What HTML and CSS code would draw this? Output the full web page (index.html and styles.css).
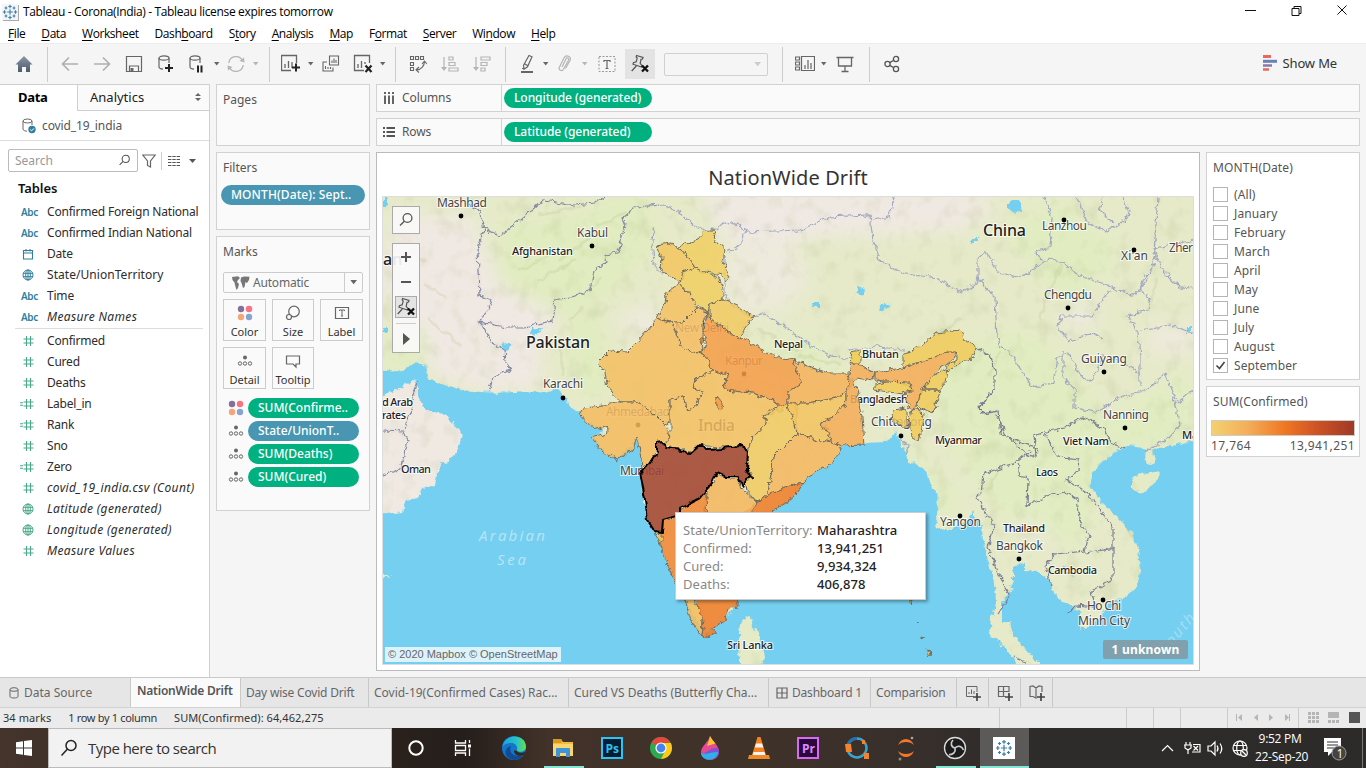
FILE: index.html
```html
<!DOCTYPE html>
<html lang="en">
<head>
<meta charset="utf-8">
<title>Tableau - Corona(India)</title>
<link rel="stylesheet" href="styles.css">
</head>
<body>
<svg class="defs" width="0" height="0">
  <defs>
    <symbol id="tableau" viewBox="0 0 16 16"><g stroke="#3d7fa8" stroke-width="1.1"><path d="M8 5.2v5.6M5.2 8h5.6M8 .8v3.4M6.3 2.5h3.4M8 11.800v3.400M6.300 13.500h3.400M.8 8h3.400M2.500 6.300v3.400M11.800 8h3.400M13.500 6.300v3.400M4 2.600v2.800M2.600 4h2.800M12 2.600v2.800M10.600 4h2.800M4 10.600v2.800M2.600 12h2.800M12 10.600v2.800M10.600 12h2.800"/></g></symbol>
    <symbol id="caret" viewBox="0 0 6 4"><path d="M0 0h5.400L2.700 3.400z" fill="currentColor"/></symbol>
    <symbol id="pin" viewBox="0 0 20 20"><g fill="none" stroke="#555" stroke-width="1.2"><path d="M6.500 1.500l6.500 2-.5 1.500-1.500.3-.8 4 1.800 2.300-.5 1.400-8.500-2.800.4-1.500 2.800-1 1-3.600-1-1.300zM6.300 12l-4.600 5"/></g><path d="M12 11.500l6 6M18 11.500l-6 6" stroke="#111" stroke-width="2.300"/></symbol>
    <symbol id="hash" viewBox="0 0 16 12"><path d="M6.500 1v10M10.500 1v10M3.500 4h10M3.500 8h10" stroke="#49a887" stroke-width="1.100"/></symbol>
    <symbol id="ehash" viewBox="0 0 16 12"><path d="M6.500 1v10M10.500 1v10M3.500 4h10M3.500 8h10M0 4.800h3M0 7.200h3" stroke="#49a887" stroke-width="1.100"/></symbol>
    <symbol id="globe" viewBox="0 0 12 12"><g fill="none" stroke="currentColor"><circle cx="6" cy="6" r="5"/><ellipse cx="6" cy="6" rx="2.300" ry="5"/><path d="M1 4.300h10M1 7.700h10M6 1v10"/></g></symbol>
    <symbol id="detail" viewBox="0 0 16 12"><circle cx="8" cy="2.500" r="2" fill="#666"/><g fill="none" stroke="#666"><circle cx="3" cy="8.500" r="1.700"/><circle cx="8" cy="8.500" r="1.700"/><circle cx="13" cy="8.500" r="1.700"/></g></symbol>
    <symbol id="color" viewBox="0 0 16 16"><circle cx="4" cy="4" r="3.200" fill="#85709b"/><circle cx="12" cy="4" r="3.200" fill="#f8737f"/><circle cx="4" cy="12" r="3.200" fill="#f5a578"/><circle cx="12" cy="12" r="3.200" fill="#86a4cf"/></symbol>
    <symbol id="lens" viewBox="0 0 16 16"><g fill="none" stroke="currentColor" stroke-width="1.300"><circle cx="9.500" cy="6" r="4.400"/><path d="M6.300 9.200L2 13.500"/></g></symbol>
    <symbol id="plus" viewBox="0 0 8 8"><path d="M4 0v8M0 4h8" stroke="#444" stroke-width="1.700"/></symbol>
  </defs>
</svg>

<header class="titlebar">
  <svg class="app-ico" width="16" height="16"><use href="#tableau"/></svg>
  <span class="app-title">Tableau - Corona(India) - Tableau license expires tomorrow</span>
  <svg class="winctl" width="120" height="20"><g fill="none" stroke="#111"><path d="M9 8.500h11M56 6.500h7v7h-7zM58 6V4.500h7v7h-2M101.500 3.500l9 9M110.500 3.500l-9 9"/></g></svg>
</header>
<nav class="menubar">
  <span><u>F</u>ile</span><span><u>D</u>ata</span><span><u>W</u>orksheet</span><span>Dash<u>b</u>oard</span><span>S<u>t</u>ory</span><span><u>A</u>nalysis</span><span><u>M</u>ap</span><span>F<u>o</u>rmat</span><span><u>S</u>erver</span><span>Wi<u>n</u>dow</span><span><u>H</u>elp</span>
</nav>

<div class="toolbar">
  <span class="t w47"><svg width="18" height="18"><defs><linearGradient id="hg" x2="0" y2="1"><stop stop-color="#8b96a5"/><stop offset="1" stop-color="#4d5b6d"/></linearGradient></defs><path d="M9 1L.5 9.500H3V17h4v-5h4v5h4V9.500h2.500z" fill="url(#hg)"/></svg></span><i class="sep"></i>
  <span class="t w32 ml6"><svg width="18" height="16"><path d="M17 8H2M8 1.500L1.500 8 8 14.500" fill="none" stroke="#b0b0b0" stroke-width="1.700"/></svg></span>
  <span class="t w32"><svg width="18" height="16"><path d="M1 8h15M10 1.500L16.500 8 10 14.500" fill="none" stroke="#b0b0b0" stroke-width="1.700"/></svg></span>
  <span class="t w32"><svg width="18" height="18"><path d="M1.500 1.500h15v15h-15zM4.500 16v-5h9v5" fill="none" stroke="#666" stroke-width="1.200"/><path d="M5.500 13h3v3.500h-3z" fill="#666"/></svg></span>
  <span class="t w32"><svg width="18" height="20"><g fill="none" stroke="#666" stroke-width="1.200"><ellipse cx="7" cy="4" rx="5" ry="2.200"/><path d="M2 4v9c0 1.300 2 2 4 2.200M12 4v5"/></g><path d="M12 10v8M8 14h8" stroke="#222" stroke-width="2"/></svg></span>
  <span class="t w30"><svg width="18" height="20"><g fill="none" stroke="#666" stroke-width="1.200"><ellipse cx="7" cy="4" rx="5" ry="2.200"/><path d="M2 4v9c0 1.300 2 2 4 2.200M12 4v5"/></g><path d="M10 11.500v7M13.500 11.500v7" stroke="#222" stroke-width="2"/></svg></span>
  <span class="t c9 dark"><svg width="6" height="4"><use href="#caret"/></svg></span>
  <span class="t w30"><svg width="18" height="18"><g fill="none" stroke="#b5b5b5" stroke-width="1.300"><path d="M1.800 8A7.300 7.300 0 0 1 15.500 5.500M16.200 10A7.300 7.300 0 0 1 2.500 12.500"/></g><path d="M12.500 6l5 1.500-.5-5zM5.500 12l-5-1.500.5 5z" fill="#b5b5b5"/></svg></span>
  <span class="t c10 pale"><svg width="6" height="4"><use href="#caret"/></svg></span><i class="sep ml8"></i>
  <span class="t w30 ml6"><svg width="20" height="20"><path d="M15.500 9V1.500h-15v15H10M4 14v-4M7.500 14V7M11 14V8" fill="none" stroke="#666" stroke-width="1.300"/><path d="M15 9.500v8M11 13.500h8" stroke="#222" stroke-width="2"/></svg></span>
  <span class="t c9 dark"><svg width="6" height="4"><use href="#caret"/></svg></span>
  <span class="t w32"><svg width="18" height="18"><g fill="none" stroke="#666" stroke-width="1.100"><path d="M7.500 1h9v9h-9zM10 8V5.500M12 8V3.500M14 8V5M5 7H1v9h10v-3.500M3.500 14v-3M6 14v-2M8.500 14v-2"/></g></svg></span>
  <span class="t w32"><svg width="20" height="20"><path d="M16.500 9V1.500h-15v15H11M5 14v-4M8.500 14V7M12 10V8" fill="none" stroke="#666" stroke-width="1.300"/><path d="M12.500 11.500l6 6.500M18.500 11.500l-6 6.500" stroke="#222" stroke-width="2.200"/></svg></span>
  <span class="t c9 dark pull"><svg width="6" height="4"><use href="#caret"/></svg></span><i class="sep ml8"></i>
  <span class="t w32 ml6"><svg width="18" height="18"><g fill="none" stroke="#666" stroke-width="1.100"><path d="M1.500 1.500h3v3h-3zM6.500 1.500h3v3h-3zM11.500 1.500h3v3h-3zM1.500 7.500h3v3h-3zM1.500 12.500h3v3h-3zM15.500 6.500c0 4-3 8-8 8.500M13 9l2.500-3L18 9M10 12l-3 2.800L10 17.500"/></g></svg></span>
  <span class="t w32"><svg width="18" height="18"><g fill="none" stroke="#b4b4b4" stroke-width="1.200"><path d="M3 2v12M8 2h4v3H8zM8 7.500h6v3H8zM8 13h9v3H8z"/></g><path d="M0 12h6l-3 4z" fill="#b4b4b4"/></svg></span>
  <span class="t w32"><svg width="18" height="18"><g fill="none" stroke="#b4b4b4" stroke-width="1.200"><path d="M3 2v12M8 2h9v3H8zM8 7.500h6v3H8zM8 13h4v3H8z"/></g><path d="M0 12h6l-3 4z" fill="#b4b4b4"/></svg></span><i class="sep ml7"></i>
  <span class="t w28 ml7"><svg width="14" height="20"><path d="M9 1.500l3 1.300-4.500 10-3.500 2.500-.5-4zM4 9.500l3.500 2M2 14.500h3" fill="none" stroke="#666" stroke-width="1.200"/><path d="M1 18h12" stroke="#666" stroke-width="2"/></svg></span>
  <span class="t c9 dark"><svg width="6" height="4"><use href="#caret"/></svg></span>
  <span class="t w30"><svg width="14" height="18"><path d="M4 12l4-8c1-2 3.500-1 2.500 1.200l-5 9C4 17 0 15 1.500 12L6 3c2-4 8-1.500 6 2.500l-4.500 8" fill="none" stroke="#b4b4b4" stroke-width="1.200"/></svg></span>
  <span class="t c10 pale"><svg width="6" height="4"><use href="#caret"/></svg></span>
  <span class="t w34"><svg width="18" height="18"><path d="M1 1.500h16v15H1z" fill="none" stroke="#999" stroke-dasharray="2 1.500"/><path d="M6 7V5.500h6V7M9 5.500v8M7.500 13.500h3" fill="none" stroke="#666" stroke-width="1.200"/></svg></span>
  <span class="t w30 active ml1"><svg width="20" height="20"><use href="#pin"/></svg></span>
  <span class="combo"><svg width="8" height="5" viewBox="0 0 6 4"><use href="#caret"/></svg></span><i class="sep ml14"></i>
  <span class="t w36 ml4"><svg width="20" height="18"><g fill="none" stroke="#666" stroke-width="1.200"><path d="M.5 2h4v3h-4zM.5 7h4v3h-4zM.5 12h4v3h-4zM6.500 1.500h13v14h-13zM10 14v-4M13 14V5M16 14V8"/></g></svg></span>
  <span class="t c9 dark mn4"><svg width="6" height="4"><use href="#caret"/></svg></span>
  <span class="t w34"><svg width="18" height="18"><path d="M.5 2.500h17M2.500 3v8h13V3M9 11v5M5.500 16.500h7" fill="none" stroke="#666" stroke-width="1.300"/></svg></span><i class="sep ml7"></i>
  <span class="t w32 ml6"><svg width="18" height="18"><g fill="none" stroke="#555" stroke-width="1.300"><circle cx="4.500" cy="9" r="2.600"/><circle cx="13" cy="4" r="2.600"/><circle cx="13" cy="14" r="2.600"/><path d="M6.800 7.600l4-2.300M6.800 10.400l4 2.300"/></g></svg></span>
  <span class="showme"><svg width="16" height="16"><path d="M1 1.500h8" stroke="#e56a5c" stroke-width="3"/><path d="M1 6.300h14" stroke="#6b7fb8" stroke-width="3"/><path d="M1 10.500h9" stroke="#8a78a8" stroke-width="2.500"/><path d="M1 14.500h6" stroke="#e56a5c" stroke-width="2.500"/></svg>Show Me</span>
</div>

<main class="work">
  <aside class="data">
    <div class="dtabs"><b>Data</b><span>Analytics<svg width="8" height="10"><path d="M1 4l3-3 3 3zM1 6l3 3 3-3z" fill="#666"/></svg></span></div>
    <div class="source"><svg width="14" height="16"><g fill="none" stroke="#666"><ellipse cx="5.500" cy="3" rx="4.500" ry="2"/><path d="M1 3v8c0 1.500 2 2 4 2.200M10 3v4"/></g><circle cx="10" cy="11.500" r="3.700" fill="#317f9f"/><path d="M8.200 11.500l1.400 1.400 2.300-2.500" fill="none" stroke="#fff"/></svg>covid_19_india</div>
    <div class="find"><span class="searchbox">Search<svg width="13" height="13"><use href="#lens"/></svg></span><svg width="14" height="14"><path d="M.8 1h12.400L8.500 7v6l-3-1.500V7z" fill="none" stroke="#666" stroke-width="1.200"/></svg><i></i><svg width="30" height="12"><path d="M0 1.500h12M0 4.500h12M0 7.500h12M0 10.500h12" stroke="#555" stroke-width="1.200" stroke-dasharray="3.400 .9"/><path d="M21 4h7l-3.500 4z" fill="#555"/></svg></div>
    <h3>Tables</h3>
    <ul class="fields dims">
      <li><em class="abc">Abc</em>Confirmed Foreign National</li>
      <li><em class="abc">Abc</em>Confirmed Indian National</li>
      <li><svg width="12" height="12"><path d="M1.500 2.500h9v8.500h-9zM1.500 5h9M4 1v2.500M8 1v2.500" fill="none" stroke="#317f9f" stroke-width="1.100"/></svg>Date</li>
      <li class="blue"><svg width="12" height="12"><use href="#globe"/></svg><span class="wide">State/UnionTerritory</span></li>
      <li><em class="abc">Abc</em>Time</li>
      <li class="it"><em class="abc">Abc</em>Measure Names</li>
    </ul>
    <ul class="fields">
      <li><svg width="16" height="12"><use href="#hash"/></svg>Confirmed</li>
      <li><svg width="16" height="12"><use href="#hash"/></svg>Cured</li>
      <li><svg width="16" height="12"><use href="#hash"/></svg>Deaths</li>
      <li><svg width="16" height="12"><use href="#ehash"/></svg>Label_in</li>
      <li><svg width="16" height="12"><use href="#ehash"/></svg>Rank</li>
      <li><svg width="16" height="12"><use href="#hash"/></svg>Sno</li>
      <li><svg width="16" height="12"><use href="#ehash"/></svg>Zero</li>
      <li class="it"><svg width="16" height="12"><use href="#hash"/></svg>covid_19_india.csv (Count)</li>
      <li class="it green"><svg width="12" height="12"><use href="#globe"/></svg>Latitude (generated)</li>
      <li class="it green"><svg width="12" height="12"><use href="#globe"/></svg>Longitude (generated)</li>
      <li class="it"><svg width="16" height="12"><use href="#hash"/></svg>Measure Values</li>
    </ul>
  </aside>

  <section class="cards">
    <div class="card pages"><h4>Pages</h4></div>
    <div class="card filters"><h4>Filters</h4><span class="pill bl">MONTH(Date): Sept..</span></div>
    <div class="card marks"><h4>Marks</h4>
      <div class="marktype"><svg width="18" height="14"><path d="M0 1l6-.8L8 2 6 4 5 6l2 2-1 4-1.500 2L3 9 2.500 6.500.5 4zM9 1.500L12 .5l5.500.3L17 4l-2 3-1.500-1-1 5-1.500 1-1.500-5L8.500 5z" fill="#777"/></svg>Automatic<i><svg width="8" height="5" viewBox="0 0 6 4"><use href="#caret"/></svg></i></div>
      <div class="btns">
        <span><svg width="16" height="16"><use href="#color"/></svg>Color</span>
        <span><svg width="16" height="16"><g fill="none" stroke="#666" stroke-width="1.200"><circle cx="9" cy="6.500" r="5.300"/><circle cx="4" cy="12" r="2.500" fill="#fafafa"/></g></svg>Size</span>
        <span><svg width="16" height="16"><path d="M1.500 2.500h13v11h-13z" fill="none" stroke="#666" stroke-width="1.200"/><path d="M5.500 6V5h5v1M8 5v6M7 11h2" fill="none" stroke="#666"/></svg>Label</span>
        <span><svg width="16" height="16" viewBox="0 -2 16 16"><use href="#detail" width="16" height="12"/></svg>Detail</span>
        <span><svg width="16" height="16"><path d="M1.500 3h13v8h-3.500v3l-3-3h-6.500z" fill="none" stroke="#666" stroke-width="1.200"/></svg>Tooltip</span>
      </div>
      <div class="enc"><svg width="16" height="16"><use href="#color"/></svg><span class="pill">SUM(Confirme..</span></div>
      <div class="enc"><svg width="16" height="12"><use href="#detail"/></svg><span class="pill bl">State/UnionT..</span></div>
      <div class="enc"><svg width="16" height="12"><use href="#detail"/></svg><span class="pill">SUM(Deaths)</span></div>
      <div class="enc"><svg width="16" height="12"><use href="#detail"/></svg><span class="pill">SUM(Cured)</span></div>
    </div>
  </section>

  <section class="right">
    <div class="shelf"><label><svg width="12" height="12"><path d="M2 0v2M6 0v2M10 0v2M2 3.500V12M6 3.500V12M10 3.500V12" stroke="#555" stroke-width="1.800"/></svg>Columns</label><span class="pill">Longitude (generated)</span></div>
    <div class="shelf"><label><svg width="12" height="12"><path d="M0 2h2M0 6h2M0 10h2M3.500 2H12M3.500 6H12M3.500 10H12" stroke="#555" stroke-width="1.800"/></svg>Rows</label><span class="pill">Latitude (generated)</span></div>
    <div class="lower">
      <div class="viz">
        <h1>NationWide Drift</h1>
        <div class="map">
<svg width="810" height="467" viewBox="383 197 810 467">
  <defs>
    <filter id="rough" x="-5%" y="-5%" width="110%" height="110%" color-interpolation-filters="sRGB"><feTurbulence type="fractalNoise" baseFrequency=".16" numOctaves="3" seed="4"/><feDisplacementMap in="SourceGraphic" scale="7" xChannelSelector="R" yChannelSelector="G"/></filter>
    <filter id="wavy" x="-5%" y="-5%" width="110%" height="110%" color-interpolation-filters="sRGB"><feTurbulence type="fractalNoise" baseFrequency=".13" numOctaves="1" seed="4"/><feDisplacementMap in="SourceGraphic" scale="8" xChannelSelector="R" yChannelSelector="G"/></filter>
    <filter id="soft" x="-20%" y="-20%" width="140%" height="140%"><feGaussianBlur stdDeviation="9"/></filter>
    <filter id="relief" x="0" y="0" width="100%" height="100%" color-interpolation-filters="sRGB"><feTurbulence type="fractalNoise" baseFrequency=".06 .05" numOctaves="3" seed="9"/><feColorMatrix values="0 0 0 0 .66  0 0 0 0 .70  0 0 0 0 .48  0 2.600 0 0 -1.350"/></filter>
    <path id="asia" d="M375 190H1200V440L1183 443 1158 447 1153 450 1155 463 1148 465 1145 457 1147 450 1140 448 1130 445 1117 450 1110 457 1102 462 1092 473 1090 487 1102 502 1117 517 1132 532 1138 548 1140 570 1137 587 1123 598 1110 602 1102 617 1080 630 1082 613 1070 605 1062 602 1057 597 1052 587 1047 578 1037 573 1025 572 1025 563 1013 564 1013 583 1007 597 1002 603 1002 622 1010 622 1012 633 1025 648 1043 668 1017 666 1007 650 990 635 992 617 996 603 995 583 988 563 983 543 982 527 972 510 968 520 950 530 935 527 938 507 937 493 930 483 927 470 910 462 907 455 900 440 895 430 887 442 863 443 842 447 833 463 807 478 793 497 773 512 745 540 738 600 725 620 705 636 690 610 667 563 655 530 648 520 642 483 643 467 640 453 637 440 617 458 603 450 594 437 603 431 583 418 583 410 570 408 568 400 557 390 533 392 513 392 490 393 463 390 437 383 428 377 425 363 415 363 400 372 375 370Z"/>
    <path id="oman" d="M375 397L397 390 410 382 415 378 418 387 418 397 423 407 447 417 458 430 463 435 458 450 448 462 442 462 437 473 435 485 422 488 418 498 405 500 402 512 375 515Z"/>
    <path id="isles" d="M742 620L750 617 760 638 765 657 758 670 742 670 738 650 740 632ZM1132 482L1137 475 1160 470 1158 480 1143 493 1132 490ZM383 575h8l-2 2h-6z"/>
    <clipPath id="land"><use href="#asia"/><use href="#oman"/><use href="#isles"/></clipPath>
  </defs>
  <rect x="383" y="197" width="810" height="467" fill="#75cff0"/>
  <g filter="url(#rough)"><use href="#asia" fill="#e6eac9"/><use href="#oman" fill="#efe9e2"/><use href="#isles" fill="#e5ebc6"/></g>
  <g clip-path="url(#land)">
    <g filter="url(#soft)" fill="#f0e9e3">
      <path d="M395 215h75l25 60 60 10 0 50-75 0 30 60-70-15-30-40-30-60zM480 300h60v90h-40zM700 190h260l40 15-40 25-110 5-120 10-20-30z"/>
      <path d="M730 250l60-10 20 40-30 30-40 0-15-30zM1060 310l30-10 10 20-30 15zM1150 325h45v30h-45zM380 470h60v40h-60zM610 320l50-20v50zM1040 440l20 20-20 10zM1020 500l35 10 10 30-40 0z" opacity=".75"/>
      <path d="M500 225l80-10 60-30 20 60-50 50-50 20-60-30zM570 310l30 0 10 90-40-10zM385 330h40v35h-40z" fill="#e1ecc0"/>
      <path d="M740 350l60 20 50 5-40-40zM930 350l100-20 80 90 80-50v70l-80 10-30 100-80-40-60-80zM1000 230l60-30 60 50-50 60zM900 440l60 60-20 20z" fill="#e0edbf" opacity=".85"/>
    </g>
    <rect x="383" y="197" width="810" height="467" filter="url(#relief)" opacity=".2"/>
    <g fill="none" stroke="#bcc391" stroke-width="3" opacity=".25" stroke-linecap="round" filter="url(#wavy)"><path d="M520 270l30-15M540 280l35-20M560 260l30-22M430 320l30 25M425 285l20 12M410 250l15 12M560 340l3 35M570 320l12-12M590 290l12-12M760 330l35 20M800 355l40 10M1040 320l8-30M1050 290l12-25M1000 350l-10 25M930 400l-10 30M1000 470l-12 20M1125 520l8 18M1150 300l8-20M960 320l-25 15M540 215l40-8M600 225l25-12"/></g>
  </g>
  <g filter="url(#rough)" fill="#75cff0"><path d="M858 286l9 4-5 6-7-3zM880 305l10 0-6 6-5-1zM812 303h8v4h-7zM1008 202l10-2 4 9-6 4-8-4zM972 238h6v4h-6zM531 329l12-2-4 6-8 1zM504 343l8 2-5 7-5-3zM383 196h4v12h-4zM1062 565l5 4 6 7-7-2zM383 328h5v4h-5zM1187 327h5v5h-5z"/></g>
  <g filter="url(#rough)" fill="none" stroke="#a2a8c2" stroke-width="1.200">
    <path stroke="#8288a3" d="M467 203L480 211 484 230 477 250 478 270 479 295 492 300 480 322 505 327 525 327 552 321 555 300 575 296 590 290 594 270 607 262 605 255 618 253 625 225 622 218 635 207 660 205M484 228L500 236 520 220 532 210 543 200 575 205 595 203 605 196M480 322L492 343 505 350 506 362 511 368 493 377 489 393M383 430l20 1 5 10-8 28-17 6M413 407l-8 20M418 381l-5 18"/>
    <path d="M640 207L665 205 680 212 692 225 705 230 717 230 725 222 740 225 745 232 737 248 727 252 M655 225l-3 15 2 25 10 10" /><path d="M725 255l0 40 6 10 22 12 10-4 28 18 20 15 20 10 20 3" /><path d="M745 232L775 231 800 230 830 217 870 215 873 240 880 260 895 270 913 275 938 278 950 287 962 292 975 285 978 278 M873 220l17-3 4-20M978 278l0-20 8-6 12 20 22 6 15-10 15-10 15 6 17 13 25 8 25 10 8-4 13-25 3-10-3-10M1044 197l8 20-2 30-15 5 8 8 M1077 197l10 25 18 10 15-8 10-10-10-22-15-2-5 20 12 12 M1158 197l-4 55 10 20 15 15 14 1M1154 250l39-10M1145 275l-5 15 10 8-2 12-20 5 10 18 2 25 0 28"/>
    <path d="M978 278l17 20 2 40 3 10 8 2 25 38 20-5 5-25 10-5 15 25 8 4 12-25 20 5 18 12 M1110 290l-18 26-30 0-5 10 12 15 25-8 8 5 M1063 350l0 25 12 15 0 18 20 4 25-14 30-10 15-15 12 30 18-15M1140 330l30-5 23 8M1172 395l8 30-10 12-25 15" />
    <path d="M977 347l12 8 6 15 0 18-15 18 2 8 16-3 3 22 15 8 22 8" stroke="#73788f"/>
    <path d="M996 415l10 20 22 20 8 2-2-22 15-4 15-3 20-11 20 12 8 15 14 4M1045 434l12 22 22 3-1 12-12 8 22 14 25 35 0 50-22 14 5 15-20-2-8 8M1030 450l-15 13-32 11-2 20-4 4 17 28-6 22 17 40 5 8-12 18M1018 463l2 13 8 2-1 28 20-10 18-4 12 8 4 25 8 10-4 16-30 3-10 12 6 20M1084 553l32-5M1014 658l14 6" stroke="#7a7f95"/>
    <path d="M900 440l8 5-2 10M848 350l30-3 26 3" />
  </g>
  <g class="lb">
    <text class="city" x="437" y="207" textLength="50">Mashhad</text><text class="city" x="577" y="237" textLength="31">Kabul</text>
    <text class="ctry" x="512" y="255" textLength="61">Afghanistan</text><text class="big" x="526" y="348" textLength="64">Pakistan</text>
    <text class="city" x="543" y="388" textLength="40">Karachi</text><text class="big" x="983" y="236" textLength="43">China</text>
    <text class="city" x="1042" y="230" textLength="45">Lanzhou</text><text class="city" x="1121" y="260" textLength="27">Xi'an</text>
    <text class="city" x="1169" y="252" textLength="24">Zher</text><text class="city" x="1044" y="299" textLength="48">Chengdu</text>
    <text class="city" x="1081" y="363" textLength="46">Guiyang</text><text class="city" x="1103" y="419" textLength="46">Nanning</text>
    <text class="ctry" x="774" y="348" textLength="29">Nepal</text><text class="ctry" x="862" y="358" textLength="37">Bhutan</text>
    <text class="ctry" x="850" y="403" textLength="58">Bangladesh</text><text class="city" x="871" y="426" textLength="61">Chittagong</text>
    <text class="ctry" x="935" y="444" textLength="47">Myanmar</text><text class="ctry" x="1063" y="445" textLength="46">Viet Nam</text>
    <text class="ctry" x="1036" y="476" textLength="22">Laos</text><text class="ctry" x="1003" y="532" textLength="42">Thailand</text>
    <text class="city" x="996" y="550" textLength="47">Bangkok</text><text class="ctry" x="1048" y="574" textLength="49">Cambodia</text>
    <text class="city" x="1087" y="610" textLength="34">Ho Chi</text><text class="city" x="1078" y="625" textLength="52">Minh City</text>
    <text class="city" x="940" y="526" textLength="41">Yangon</text><text class="ctry" x="727" y="649" textLength="46">Sri Lanka</text>
    <text class="ctry" x="401" y="473" textLength="30">Oman</text><text class="big" x="383" y="265">an</text>
    <text class="ctry" x="382" y="406" textLength="31">d Arab</text><text class="ctry" x="382" y="419" textLength="24">rates</text>
    <text class="ctry" x="1182" y="439">Ma</text>
    <text class="city" x="675" y="332" textLength="54">New Delhi</text><text class="city" x="725" y="365" textLength="38">Kanpur</text>
    <text class="big" x="698" y="431" textLength="37">India</text><text class="city" x="606" y="416" textLength="64">Ahmedabad</text><text class="city" x="620" y="475" textLength="44">Mumbai</text>
    <g><circle cx="461" cy="216" r="2.400"/><circle cx="592" cy="246" r="2.400"/><circle cx="563" cy="398" r="2.400"/><circle cx="1064" cy="220" r="2.400"/><circle cx="1134" cy="250" r="2.400"/><circle cx="1068" cy="308" r="2.400"/><circle cx="1104" cy="372" r="2.400"/><circle cx="1125" cy="428" r="2.400"/><circle cx="901" cy="436" r="2.400"/><circle cx="960" cy="516" r="2.400"/><circle cx="1019" cy="559" r="2.400"/><circle cx="1103" cy="600" r="2.400"/><circle cx="744" cy="374" r="2.400"/><circle cx="638" cy="425" r="2.400"/></g>
    <text class="sea" x="479" y="541" textLength="68">Arabian</text><text class="sea" x="497" y="565" textLength="31">Sea</text>
    <text class="sea" x="0" y="0" transform="translate(1166 654) rotate(-50)" opacity=".7">South C</text>
  </g>
  <g class="states" filter="url(#rough)">
    <path fill="#f3c55f" d="M657 245L670 243 677 247 685 253 695 268 685 272 682 282 667 275 660 267 662 257Z"/>
    <path fill="#f1cf62" d="M677 247L697 240 705 231 713 231 717 243 725 250 723 262 730 277 727 281 722 275 708 272 700 272 695 268 685 253Z"/>
    <path fill="#f1cf62" d="M683 272L695 268 707 273 718 277 723 290 723 300 710 302 708 313 700 308 690 295 680 283Z"/>
    <path fill="#f5c163" d="M680 283L667 292 665 303 657 317 665 322 683 322 697 308 690 295Z"/>
    <path fill="#f5bd63" d="M665 322L672 323 675 330 678 340 685 350 703 353 702 337 702 323 708 313 697 308 683 322Z"/>
    <path fill="#f1ca61" d="M710 302L723 300 740 307 753 316 745 328 740 338 722 328 710 318Z"/>
    <path fill="#f5be61" d="M657 318L637 342 627 352 610 351 598 363 605 373 608 387 617 398 620 402 637 402 653 413 665 425 670 423 670 400 683 397 687 410 695 408 703 390 693 388 695 380 712 370 703 353 685 350 678 340 672 323Z"/>
    <path fill="#f5bb5e" d="M583 408L603 406 617 402 637 402 653 413 665 425 670 436 664 443 657 443 657 452 650 463 642 468 640 453 637 437 633 450 617 460 603 452 590 437 607 433 609 427 597 430 583 420 580 413Z"/>
    <path fill="#f4bf61" d="M712 370L728 375 723 387 727 390 753 393 767 398 778 402 778 411 762 415 768 423 753 437 748 448 740 446 722 448 707 447 700 445 690 453 683 450 665 447 664 443 670 436 670 400 683 397 687 410 695 408 703 390 693 388 695 380Z"/>
    <path fill="#f49c47" d="M708 313L710 318 722 328 740 338 757 347 777 357 793 360 798 372 802 383 787 393 787 403 783 413 778 411 778 402 767 398 753 393 740 392 727 390 723 387 728 375 712 370 703 353 707 340 702 330ZM718 397l6 8-4 3-5-4z"/>
    <path fill="#d88124" d="M701 338l4 1-1 5-4-1z"/>
    <path fill="#f1ca61" d="M787 403L797 405 797 433 785 445 773 457 772 470 768 493 757 502 747 490 745 480 752 478 747 470 748 448 753 437 768 423 762 415Z"/>
    <path fill="#f4b259" d="M793 360L813 368 827 373 850 373 852 387 847 390 837 398 807 403 787 403 787 393 802 383 798 372Z"/>
    <path fill="#f3c35f" d="M787 403L807 403 837 398 847 390 847 402 833 417 820 422 827 430 833 442 820 440 797 433Z"/>
    <path fill="#f4ab56" d="M850 373L852 363 860 365 875 372 873 380 857 377 853 383 860 392 857 397 862 417 864 445 842 446 833 442 820 422 833 417 847 402 847 390Z"/>
    <path fill="#f4b65d" d="M797 433L820 440 833 442 842 447 833 463 807 478 803 484 790 485 773 492 757 502 768 493 772 470 773 457 785 445Z"/>
    <path fill="#ee7b28" d="M804 483L790 485 773 492 757 502 735 520 745 540 773 512 793 497Z"/>
    <path fill="#f4b65d" d="M717 472L727 477 738 477 742 488 757 502 748 520 702 520 707 495 712 483Z"/>
    <path fill="#f08532" d="M707 493L680 508 680 515 663 520 662 532 658 535 660 543 667 563 675 583 700 590 706 520Z"/>
    <path fill="#f1ca61" d="M655 532L662 533 662 541 659 543Z"/>
    <path fill="#f4bb5d" d="M670 573L675 583 685 600 690 617 695 628 702 637 703 615 697 605 690 590Z"/>
    <path fill="#ee7b28" d="M697 590L738 590 738 607 730 608 725 620 715 627 713 633 705 638 702 636 704 620 697 607Z"/>
    <path fill="#f1ca4a" d="M852 352L860 350 860 364 850 364Z"/>
    <path fill="#f4ab56" d="M875 372L903 368 927 360 947 352 957 352 953 360 938 370 923 387 917 407 910 408 905 400 911 390 905 383 875 380Z"/>
    <path fill="#f1ca58" d="M903 355L920 347 937 333 960 330 965 340 977 347 972 360 960 362 947 372 948 365 957 360 957 352 947 352 927 360 903 367Z"/>
    <path fill="#f1ca58" d="M947 368L945 383 940 390 923 390 930 378ZM920 390L942 390 933 413 918 408ZM912 408L923 412 922 427 918 440 912 437 910 420ZM875 383L887 381 910 382 912 392 903 394 875 390ZM893 410L907 408 907 427 902 427 892 418ZM910 600l3 0-1 5zM926 648l5 3-1 5zM917 621h1v1zM922 637l3 1-3 1z"/>
  </g>
  <path class="maha" filter="url(#wavy)" d="M657 443L663 442 665 448 683 450 690 454 700 445 707 449 722 448 740 446 748 450 747 470 752 478 745 480 742 488 738 477 727 477 717 472 712 483 700 498 680 508 680 515 663 520 662 532 655 531 648 520 645 500 642 483 640 470 650 463 657 452Z"/>
</svg>
          <span class="mt search"><svg width="16" height="16"><use href="#lens"/></svg></span>
          <span class="mt tools"><svg width="12" height="12"><path d="M6 1v10M1 6h10" stroke="#555" stroke-width="2"/></svg><svg width="12" height="12"><path d="M1 6h10" stroke="#555" stroke-width="2"/></svg><b><svg width="20" height="20"><use href="#pin"/></svg></b><i></i><svg width="8" height="12"><path d="M1 0l7 6-7 6z" fill="#555"/></svg></span>
          <span class="credit">© 2020 Mapbox © OpenStreetMap</span>
          <span class="unknown">1 unknown</span>
          <dl class="tip"><dt>State/UnionTerritory:</dt><dd>Maharashtra</dd><dt>Confirmed:</dt><dd>13,941,251</dd><dt>Cured:</dt><dd>9,934,324</dd><dt>Deaths:</dt><dd>406,878</dd></dl>
        </div>
      </div>
      <aside class="legends">
        <div class="months"><h4>MONTH(Date)</h4>
          <p><i></i>(All)</p><p><i></i>January</p><p><i></i>February</p><p><i></i>March</p><p><i></i>April</p><p><i></i>May</p><p><i></i>June</p><p><i></i>July</p><p><i></i>August</p><p><i><svg width="13" height="13"><path d="M2.500 6.500l3 3 5-6.500" fill="none" stroke="#444" stroke-width="1.600"/></svg></i>September</p></div>
        <div class="legend"><h4>SUM(Confirmed)</h4><div class="ramp"></div><div class="ends"><span>17,764</span><span>13,941,251</span></div></div>
      </aside>
    </div>
  </section>
</main>

<nav class="sheets">
  <span class="s1"><svg width="10" height="12"><g fill="none" stroke="#666"><ellipse cx="5" cy="2.500" rx="4" ry="1.800"/><path d="M1 2.500v7c0 2 8 2 8 0v-7"/></g></svg>Data Source</span><span class="s2">NationWide Drift</span><span class="s3">Day wise Covid Drift</span><span class="s4">Covid-19(Confirmed Cases) Rac...</span><span class="s5">Cured VS Deaths (Butterfly Cha...</span><span class="s6"><svg width="12" height="12"><path d="M1 1h10v10H1zM6 1v10M1 6h10" fill="none" stroke="#666" stroke-width="1.200"/></svg>Dashboard 1</span><span class="s7">Comparision</span>
  <span class="s8"><svg width="16" height="16"><path d="M12 7V1.500H1.500v10H8M4 9V7M6.500 9V4.500M9 9V6" fill="none" stroke="#666"/><use href="#plus" x="8" y="8" width="8" height="8"/></svg></span><span class="s8"><svg width="16" height="16"><path d="M12 7V1.500H1.500v10H8M6.500 1.500v10M1.500 6.500H12" fill="none" stroke="#666" stroke-width="1.200"/><use href="#plus" x="8" y="8" width="8" height="8"/></svg></span><span class="s8"><svg width="16" height="16"><path d="M13 7V1.500L10 1 7 3 4 1 1 1.500v10h3l3 1.500V3" fill="none" stroke="#666" stroke-width="1.200"/><use href="#plus" x="8" y="8" width="8" height="8"/></svg></span>
</nav>
<div class="status"><span>34 marks</span><span class="tight">1 row by 1 column</span><span>SUM(Confirmed): 64,462,275</span>
  <svg class="nav" width="367" height="20"><path d="M.5 0v20M127.500 0v20M154.500 0v20M181.500 0v20M228.500 0v20M299.500 0v20" stroke="#ccc"/><path d="M237 6v7h1V6zM243 6v7l-4-3.500zM259 6v7l-4-3.500zM270 6v7l4-3.500zM286 6v7l4-3.500zM290 6v7h1V6z" fill="#b5b5b5"/><path d="M309 5.500h11M309 9.500h11M309 13.500h11" stroke="#b5b5b5" stroke-width="3" stroke-dasharray="3 1"/><path d="M329 4h11v6h-11z" fill="#b5b5b5"/><path d="M329 13.500h11" stroke="#b5b5b5" stroke-width="3" stroke-dasharray="3 1"/><path d="M350 4h11v11h-11z" fill="#555"/></svg>
</div>

<footer class="taskbar">
  <span class="start"><svg width="16" height="16"><path d="M0 2.300L7 1.200V7.600H0zM8 1l8-1v7.600H8zM0 8.500h7v6.300L0 13.800zM8 8.500h8V16l-8-1.100z" fill="#fff"/></svg></span>
  <span class="tsearch"><svg width="18" height="18"><g fill="none" stroke="#222" stroke-width="1.500"><circle cx="11" cy="6.500" r="5"/><path d="M7.500 10L1.500 16.500"/></g></svg>Type here to search</span>
  <span class="app"><svg width="24" height="24"><circle cx="12" cy="12" r="6.700" fill="none" stroke="#fff" stroke-width="2"/></svg></span>
  <span class="app"><svg width="24" height="24"><path d="M2.500 4v3h10V4M2.500 20v-3h10v3M2.500 9.500h10v5h-10zM16.500 4v3M16.500 12.500V20" fill="none" stroke="#fff" stroke-width="1.300"/><path d="M15 8.500h3v3h-3z" fill="#fff"/></svg></span>
  <span class="app"><svg width="26" height="26"><defs><linearGradient id="eg" x1="0" x2="1"><stop stop-color="#1aa0e4"/><stop offset=".6" stop-color="#27c3c5"/><stop offset="1" stop-color="#66e04f"/></linearGradient></defs><circle cx="13" cy="13" r="12" fill="#1476c6"/><path d="M1.500 12C3-2 25-2 25 12c0 4-5 6-9.500 4 2-4-1-8-5-8-5 0-8 2-9 4z" fill="url(#eg)"/><path d="M10 11c-3 6 3 12 12 9-4 7-14 6-17 0-2-4 1-8 5-9z" fill="#114b95"/><path d="M15.500 15.500c2 3 7 3 9 .5l-1.500 4c-5 2-10 0-10-4.500z" fill="#312822"/></svg></span>
  <span class="app run"><svg width="24" height="24"><path d="M2 3h8l2 3h10v14H2z" fill="#f1bd3b"/><path d="M2 3h8l1 2-1 2H2z" fill="#d99a1e"/><path d="M2 8h20v12H2z" fill="#fbd66e"/><path d="M5 21v-8q0-1 1-1h12q1 0 1 1v8h-4v-4H9v4z" fill="#3c95d8"/></svg></span>
  <span class="app"><svg width="24" height="24"><rect x="2" y="2" width="20" height="20" fill="#061e31" stroke="#2fc2f4" stroke-width="2"/><text x="5.500" y="16.500" class="ad" fill="#2fc2f4">Ps</text></svg></span>
  <span class="app"><svg width="24" height="24"><circle cx="12" cy="12" r="11" fill="#2da94f"/><path d="M12 12L2.500 6.500A11 11 0 0 1 21.500 6.500L12 7z" fill="#e5473a"/><path d="M12 7h9.800A11 11 0 0 1 12 23l4.500-9z" fill="#fbc916"/><circle cx="12" cy="12" r="5" fill="#4484ef" stroke="#fff" stroke-width="1.200"/></svg></span>
  <span class="app"><svg width="22" height="26"><path d="M11 1c2 5 9 9 9 16a9 8 0 0 1-18 0C2 11 9 8 11 1z" fill="#e64a97"/><path d="M11 1c1.500 3 3.500 5 5.500 7.500L8 11c1-3 2-5 3-10z" fill="#fcc62d"/><path d="M2 18c5 2 8-6 17-5 2 4 1 7-1 9-4 4-15 4-16-4z" fill="#8352cd"/><path d="M2 18c5 2 10-1 17-1-1 10-16 10-17 1z" fill="#2fb0ea"/></svg></span>
  <span class="app"><svg width="24" height="26"><path d="M10.500 2h3l5.500 18H5z" fill="#f58220"/><path d="M9 8.500h6l1.300 4H7.800zM6.500 17h11l.8 3H5.700z" fill="#f4f4f4"/><path d="M2 20h20l1 4H1z" fill="#f08a24"/></svg></span>
  <span class="app"><svg width="24" height="24"><rect x="2" y="2" width="20" height="20" fill="#2a0a3e" stroke="#d66bf2" stroke-width="2"/><text x="6" y="16.500" class="ad" fill="#e08bff">Pr</text></svg></span>
  <span class="app"><svg width="26" height="26"><circle cx="13" cy="13" r="9.500" fill="none" stroke="#39a5cf" stroke-width="2.500"/><path d="M13 3.500a9.500 9.500 0 0 0-9 6" fill="none" stroke="#2672ae" stroke-width="3"/><path d="M1 9h6l1 8H2zM20 18h5v6h-5zM18 5h3v4h-3z" fill="#f5822c"/></svg></span>
  <span class="app"><svg width="24" height="26"><path d="M4 10C7 2 17 2 20 10 16 6 8 6 4 10zM4 16c3 8 13 8 16 0-4 4-12 4-16 0z" fill="#f37726"/><circle cx="18" cy="3" r="1.300" fill="#aaa"/><circle cx="6" cy="24" r="1.500" fill="#888"/></svg></span>
  <span class="app run"><svg width="24" height="24"><circle cx="12" cy="12" r="10.500" fill="#1c1c1c" stroke="#ddd" stroke-width="1.300"/><g fill="none" stroke="#ccc" stroke-width="1.700"><path d="M12 12C8 11 7 7 10 4M12 12c3-3 7-2 8.500 2M12 12c1 4-2 7-6 6.500"/></g></svg></span>
  <span class="app run cur"><svg width="22" height="22"><path d="M0 0h22v22H0z" fill="#fff"/><use href="#tableau" x="2" y="2" width="18" height="18"/></svg></span>
  <span class="tray"><svg width="96" height="24"><g fill="none" stroke="#fff" stroke-width="1.200"><path d="M10 15l5.500-5.500L21 15M34 6v3M38 6v3M32 9h8M33 9v3l3 2 3-2V9M36 14v4M41 8.500h7v7.500h-8M41.500 10l4.500 4.500M46 10l-4.500 4.500M56 10h3l4-4v13l-4-4h-3zM65 9.500q2 3 0 6M68 7.500q3.500 5 0 10"/><circle cx="88" cy="12" r="7"/><ellipse cx="88" cy="12" rx="3.300" ry="7"/><path d="M81 9.500h14M81 14.500h8"/><circle cx="92" cy="17" r="3.300" fill="#333"/><path d="M90 15l4 4"/></g></svg></span>
  <span class="clock">9:52 PM<br>22-Sep-20</span>
  <span class="note"><svg width="30" height="32"><path d="M3 5h17v14h-9l-4 4v-4H3z" fill="#fff"/><path d="M6 9h11M6 12h11M6 15h8" stroke="#333"/><circle cx="18" cy="20" r="7" fill="#444" stroke="#999"/><text x="15.500" y="24.500" class="one">1</text></svg></span>
</footer>
</body>
</html>
```
FILE: styles.css
```css
* { box-sizing: border-box; }
body { margin: 0; width: 1366px; height: 768px; overflow: hidden; display: flex; flex-direction: column; background: #f5f5f5; color: #333; font: 12px/16px "Noto Sans", "Open Sans", sans-serif; white-space: nowrap; }
svg { display: block; flex: none; }
.defs { position: absolute; }
h1, h3, h4, ul, p, dl, dd, dt { margin: 0; padding: 0; font-weight: normal; }
li { list-style: none; }

.titlebar { height: 24px; flex: none; background: #fff; display: flex; align-items: center; color: #000; font: 12px/16px "Open Sans", sans-serif; letter-spacing: -.34px; padding: 0 0 1px 2px; }
.app-ico { background: #f3f5f6; box-shadow: 1px 1px 0 #aaa; margin-right: 5px; }
.winctl { margin-left: auto; margin-right: 10px; }
.menubar { height: 19px; flex: none; background: #fff; display: flex; gap: 16px; padding: 2px 8px 0; color: #000; font: 12px/16px "Open Sans", sans-serif; letter-spacing: -.42px; }
.menubar u { text-underline-offset: 2px; }

.toolbar { height: 41px; flex: none; display: flex; align-items: center; background: #f5f5f5; border-top: 1px solid #ededed; }
.t { display: flex; align-items: center; justify-content: center; height: 30px; flex: none; }
.sep { width: 1px; height: 35px; background: #ccc; flex: none; }
.w28 { width: 28px; } .w30 { width: 30px; } .w32 { width: 32px; } .w34 { width: 34px; } .w36 { width: 36px; } .w47 { width: 47px; }
.c9 { width: 9px; } .c10 { width: 10px; }
.ml1 { margin-left: 1px; } .ml4 { margin-left: 4px; } .ml6 { margin-left: 6px; } .ml7 { margin-left: 7px; } .ml8 { margin-left: 8px; } .ml14 { margin-left: 14px; }
.mn4 { margin-left: -4px; } .pull { margin-left: -1px; }
.dark { color: #666; } .pale { color: #b5b5b5; }
.active { background: #e3e3e3; }
.combo { width: 104px; height: 23px; margin-left: 9px; border: 1px solid #d0d0d0; border-radius: 2px; display: flex; justify-content: flex-end; align-items: center; padding-right: 5px; color: #ccc; }
.showme { margin-left: auto; margin-right: 29px; display: flex; gap: 5px; align-items: center; font-size: 13px; letter-spacing: -.15px; padding-bottom: 2px; }

.work { flex: none; height: 593px; display: flex; gap: 6px; }
.data { width: 210px; background: #fff; border-right: 1px solid #cfcfcf; flex: none; }
.dtabs { height: 27px; display: flex; color: #222; border-top: 1px solid #cfcfcf; }
.dtabs b { width: 77px; padding: 4px 0 0 18px; color: #000; font-size: 13px; letter-spacing: -.3px; }
.dtabs span { flex: 1; background: #fafafa; border: 1px solid #cfcfcf; border-width: 0 0 1px 1px; display: flex; justify-content: space-between; align-items: center; padding: 0 7px 2px 12px; font-size: 13px; letter-spacing: 0; }
.source { height: 30px; border-bottom: 1px solid #ddd; display: flex; gap: 6px; align-items: center; padding-left: 22px; color: #555; letter-spacing: -.1px; }
.find { height: 39px; display: flex; align-items: center; padding-left: 8px; }
.searchbox { width: 130px; height: 23px; border: 1px solid #bbb; border-radius: 2px; display: flex; align-items: center; justify-content: space-between; padding: 0 6px; margin-right: 4px; color: #999; }
.searchbox svg { color: #555; }
.find i { width: 1px; height: 18px; background: #ccc; margin: 0 6px 0 5px; }
.data h3 { height: 21px; padding: 0 18px; line-height: 16px; font-weight: 600; font-size: 13px; color: #111; letter-spacing: -.1px; }
.fields li { height: 21px; display: flex; align-items: center; color: #2c2c2c; letter-spacing: -.2px; }
.fields li > :first-child { width: 16px; margin: 0 10px 0 21px; flex: none; }
.fields li svg[width="16"] { margin-left: 20px; margin-right: 11px; }
.fields li svg[width="12"] { margin-left: 22px; width: 12px; margin-right: 13px; padding: 0; }
.fields .abc { font: 600 10px "Noto Sans", sans-serif; color: #317f9f; letter-spacing: -.4px; }
.fields.dims { border-bottom: 1px solid #ddd; width: 188px; margin: 0 0 1px 15px; height: 128px; }
.fields.dims li { margin-left: -15px; }
.fields .it { font-style: italic; letter-spacing: .35px; }
.wide { letter-spacing: .05px; }
.blue svg { color: #317f9f; } .green svg { color: #49a887; }

.cards { width: 154px; display: flex; flex-direction: column; gap: 6px; flex: none; }
.card { border: 1px solid #d2d2d2; background: #fafafa; padding: 7px 6px; }
.card h4 { color: #555; font-size: 12px; }
.pages { height: 62px; } .filters { height: 78px; padding-right: 4px; padding-left: 4px; } .filters h4 { padding-left: 2px; }
.marks { height: 275px; }
.pill { display: block; height: 20px; border-radius: 10px; background: #00b180; color: #fff; padding: 0 10px; line-height: 19px; font-size: 12px; font-weight: 500; width: 111px; }
.pill.bl { background: #4996b2; }
.filters .pill { width: 144px; margin-top: 9px; letter-spacing: .1px; }
.marktype { height: 21px; margin-top: 12px; width: 140px; border: 1px solid #ccc; border-radius: 2px; display: flex; align-items: center; gap: 3px; padding-left: 8px; color: #666; letter-spacing: -.2px; }
.marktype i { margin-left: auto; width: 18px; height: 100%; border-left: 1px solid #ccc; display: flex; align-items: center; justify-content: center; }
.btns { display: grid; grid-template-columns: 43px 42px 43px; gap: 6px 6px; margin-top: 6px; }
.btns span { height: 42px; border: 1px solid #ccc; display: flex; flex-direction: column; align-items: center; padding-top: 5px; gap: 3px; font-size: 11px; }
.enc { height: 23px; display: flex; align-items: center; gap: 3px; padding-left: 6px; }
.btns + .enc { margin-top: 7px; }
.enc svg { margin-left: -1px; margin-right: 1px; }

.right { width: 984px; display: flex; flex-direction: column; gap: 6px; flex: none; }
.shelf { height: 28px; border: 1px solid #d2d2d2; background: #fafafa; display: flex; align-items: center; }
.shelf label { width: 125px; height: 26px; border-right: 1px solid #d2d2d2; display: flex; align-items: center; gap: 7px; padding-left: 6px; color: #555; margin-right: 2px; letter-spacing: -.1px; }
.shelf .pill { width: 148px; letter-spacing: -.05px; }
.lower { display: flex; gap: 6px; align-items: flex-start; }
.viz { width: 824px; height: 519px; background: #fff; border: 1px solid #bbb; }
.viz h1 { height: 43px; text-align: center; font-size: 20px; line-height: 50px; color: #333; letter-spacing: .1px; }
.map { position: relative; margin-left: 5px; width: 812px; height: 469px; border: 1px solid #ddd; overflow: hidden; }
.city { font: 12px "Noto Sans", sans-serif; fill: #444; }
.ctry { font: 500 11px "Noto Sans", sans-serif; fill: #222; }
.big { font: 500 16px "Noto Sans", sans-serif; fill: #222; }
.city, .ctry, .big { stroke: #fffb; stroke-width: 2px; paint-order: stroke; }
.sea { font: italic 15px "Open Sans", sans-serif; fill: #b9e5f6; letter-spacing: 2px; }
.states path { fill-opacity: .85; stroke: #706c60; stroke-width: 1; }
.maha { fill: #a34632; fill-opacity: .88; stroke: #000; stroke-width: 2; stroke-linejoin: round; }
.mt { position: absolute; left: 9px; width: 28px; background: #f9f9f9e8; border: 1px solid #aaa; color: #555; display: flex; align-items: center; }
.search { top: 9px; height: 28px; justify-content: center; }
.tools { top: 46px; height: 110px; flex-direction: column; padding-top: 7px; }
.tools svg:nth-child(2) { margin-top: 13px; }
.tools b { width: 22px; height: 22px; border: 1px solid #aaa; background: #e4e4e4; margin-top: 8px; }
.tools i { width: 20px; height: 1px; background: #ccc; margin: 5px 0 9px; }
.credit { position: absolute; left: 2px; bottom: 2px; height: 15px; padding: 0 3px; background: #ffffffc0; color: #666; font: 11px/15px "Liberation Sans", sans-serif; }
.unknown { position: absolute; right: 5px; bottom: 5px; width: 85px; height: 19px; border-radius: 2px; background: #829aa4e0; color: #fff; font: bold 12px/19px "Noto Sans", sans-serif; text-align: center; letter-spacing: .2px; }
.tip { position: absolute; left: 292px; top: 315px; width: 251px; height: 88px; background: #fff; border: 1px solid #ccc; box-shadow: 2px 2px 3px #0005; padding: 8px 7px; display: grid; grid-template-columns: 134px 1fr; grid-auto-rows: 18px; line-height: 18px; font-size: 13px; }
.tip dt { color: #888; letter-spacing: .05px; } .tip dd { color: #222; font-weight: 500; letter-spacing: .05px; }
.legends { width: 154px; display: flex; flex-direction: column; gap: 6px; }
.months, .legend { background: #fff; border: 1px solid #d2d2d2; }
.months { height: 228px; } .legend { height: 71px; }
.legends h4 { padding: 7px 6px 3px; color: #555; letter-spacing: .1px; }
.months h4 { height: 32px; }
.months p { height: 19px; display: flex; align-items: center; gap: 6px; padding-left: 6px; color: #555; letter-spacing: .1px; }
.months i { width: 15px; height: 15px; border: 1px solid #b5b5b5; }
.legend .ramp { height: 16px; margin: 7px 4px 0; background: linear-gradient(90deg, #f3d170, #f4ae5a 25%, #ef7622 52%, #cc5125 75%, #9e3a26); border: 1px solid #ccc; }
.ends { display: flex; justify-content: space-between; padding: 2px 4px; color: #555; letter-spacing: .4px; }

.sheets { height: 31px; flex: none; display: flex; background: #e6e6e6; border-top: 1px solid #c9c9c9; border-bottom: 1px solid #d2d2d2; color: #666; font-size: 12px; }
.sheets span { border-right: 1px solid #c9c9c9; display: flex; align-items: center; padding-left: 5px; flex: none; }
.sheets .s1 { width: 131px; padding-left: 9px; gap: 5px; }
.sheets .s2 { width: 110px; background: #fafafa; font-weight: 600; color: #555; letter-spacing: -.22px; padding-bottom: 3px; padding-left: 6px; }
.sheets .s3 { width: 128px; } .s4 { width: 200px; } .s5 { width: 200px; } .sheets .s6 { width: 102px; gap: 4px; padding-left: 7px; } .s7 { width: 86px; } .sheets .s8 { width: 32px; padding-left: 8px; }
.sheets .s3, .sheets .s6, .sheets .s7 { letter-spacing: -.2px; }
.sheets .s4, .sheets .s5 { letter-spacing: -.02px; }
.status { height: 20px; flex: none; background: #ebebeb; display: flex; gap: 17px; padding-left: 3px; color: #333; font-size: 11px; line-height: 20px; }
.status span { letter-spacing: .08px; } .status .tight { letter-spacing: -.32px; }
.nav { margin-left: auto; }

.taskbar { height: 40px; flex: none; display: flex; background: linear-gradient(90deg, #44342b 0, #2a211c 29%, #251e1b 34%, #423229 40%, #3f3229 55%, #3a302b 64%, #2e2c2a 75%, #2c2b2a 100%); color: #fff; }
.start { width: 48px; display: flex; align-items: center; justify-content: center; }
.tsearch { width: 344px; background: #f2f2f2; border: 1px solid #bbb; display: flex; align-items: center; gap: 10px; padding-left: 11px; color: #333; font: 15px "Open Sans", sans-serif; letter-spacing: -.52px; }
.app { width: 49px; display: flex; align-items: center; justify-content: center; flex: none; }
.app:nth-child(n+3) svg { margin-left: -1px; }
.run { background: linear-gradient(#86e5d6, #86e5d6) center bottom / 40px 2px no-repeat; }
.cur { background: linear-gradient(#86e5d6, #86e5d6) center bottom / 49px 2px no-repeat #5c5a58; }
.ad { font: bold 12px "Open Sans", sans-serif; }
.tray { margin-left: auto; display: flex; align-items: center; padding-right: 7px; }
.clock { font: 12px/18px "Open Sans", sans-serif; text-align: center; letter-spacing: -.3px; padding-top: 2px; width: 50px; }
.note { width: 58px; padding: 5px 0 0 16px; border-right: 1px solid #777; margin-right: 3px; }
.one { font: 12px "Open Sans", sans-serif; fill: #fff; }
```
